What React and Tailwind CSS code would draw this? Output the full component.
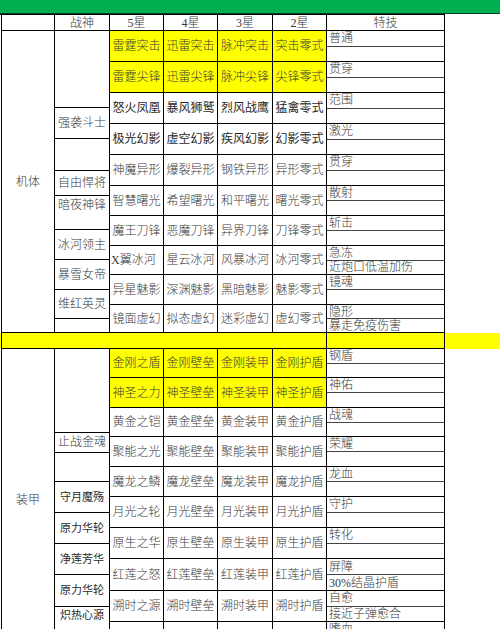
import React from "react";

const SERIF = "font-['Liberation_Serif','Noto_Sans_CJK_SC',serif] font-light text-[#3a3a3a]";
const SANS = "font-['Liberation_Sans','Noto_Sans_CJK_SC',sans-serif] font-normal text-[#2a2a2a]";

const STAR_W = ["w-[54px]", "w-[54px]", "w-[55px]", "w-[54px]"];

const sec1 = [
  { h: "h-[31px]", y: true, c: ["雷霆突击", "迅雷突击", "脉冲突击", "突击零式"], s: ["普通", ""] },
  { h: "h-[31px]", y: true, c: ["雷霆尖锋", "迅雷尖锋", "脉冲尖锋", "尖锋零式"], s: ["贯穿", ""] },
  { h: "h-[31px]", sans: true, c: ["怒火凤凰", "暴风狮鹫", "烈风战鹰", "猛禽零式"], s: ["范围", ""] },
  { h: "h-[31px]", sans: true, c: ["极光幻影", "虚空幻影", "疾风幻影", "幻影零式"], s: ["激光", ""] },
  { h: "h-[31px]", c: ["神魔异形", "爆裂异形", "钢铁异形", "异形零式"], s: ["贯穿", ""] },
  { h: "h-[30px]", c: ["智慧曙光", "希望曙光", "和平曙光", "曙光零式"], s: ["散射", ""] },
  { h: "h-[30px]", c: ["魔王刀锋", "恶魔刀锋", "异界刀锋", "刀锋零式"], s: ["斩击", ""] },
  { h: "h-[29px]", c: ["X翼冰河", "星云冰河", "风暴冰河", "冰河零式"], s: ["急冻", "近炮口低温加伤"], left0: true },
  { h: "h-[30px]", c: ["异星魅影", "深渊魅影", "黑暗魅影", "魅影零式"], s: ["镜魂", ""] },
  { h: "h-[28px]", c: ["镜面虚幻", "拟态虚幻", "迷彩虚幻", "虚幻零式"], s: ["隐形", "暴走免疫伤害"] },
];

const sec2 = [
  { h: "h-[29px]", y: true, c: ["金刚之盾", "金刚壁垒", "金刚装甲", "金刚护盾"], s: ["钢盾", ""] },
  { h: "h-[30px]", y: true, c: ["神圣之力", "神圣壁垒", "神圣装甲", "神圣护盾"], s: ["神佑", ""] },
  { h: "h-[29px]", c: ["黄金之铠", "黄金壁垒", "黄金装甲", "黄金护盾"], s: ["战魂", ""] },
  { h: "h-[30px]", c: ["聚能之光", "聚能壁垒", "聚能装甲", "聚能护盾"], s: ["荣耀", ""] },
  { h: "h-[30px]", c: ["魔龙之鳞", "魔龙壁垒", "魔龙装甲", "魔龙护盾"], s: ["龙血", ""] },
  { h: "h-[31px]", c: ["月光之轮", "月光壁垒", "月光装甲", "月光护盾"], s: ["守护", ""] },
  { h: "h-[31px]", c: ["原生之华", "原生壁垒", "原生装甲", "原生护盾"], s: ["转化", ""] },
  { h: "h-[32px]", c: ["红莲之怒", "红莲壁垒", "红莲装甲", "红莲护盾"], s: ["屏障", "30%结晶护盾"] },
  { h: "h-[31px]", c: ["溯时之源", "溯时壁垒", "溯时装甲", "溯时护盾"], s: ["自愈", "接近子弹愈合"] },
  { h: "h-[30px]", c: ["", "", "", ""], s: ["嗜血", ""] },
];

const names1 = [
  { h: "h-[77px]", t: "" },
  { h: "h-[31px]", t: "强袭斗士" },
  { h: "h-[32px]", t: "" },
  { h: "h-[25px]", t: "自由悍将" },
  { h: "h-[34px]", t: "暗夜神锋", top: true },
  { h: "h-[30px]", t: "冰河领主" },
  { h: "h-[30px]", t: "暴雪女帝" },
  { h: "h-[29px]", t: "维红英灵" },
  { h: "h-[14px]", t: "" },
];

const names2 = [
  { h: "h-[84px]", t: "" },
  { h: "h-[20px]", t: "止战金魂", top: true },
  { h: "h-[29px]", t: "" },
  { h: "h-[31px]", t: "守月魔殇", sans: true },
  { h: "h-[31px]", t: "原力华轮", sans: true },
  { h: "h-[31px]", t: "净莲芳华", sans: true },
  { h: "h-[32px]", t: "原力华轮", sans: true },
  { h: "h-[45px]", t: "炽热心源", sans: true, top: true },
];

function Row({ r }) {
  return (
    <div className={`flex ${r.h}`}>
      {r.c.map((t, i) => (
        <div
          key={i}
          className={`${STAR_W[i]} h-full flex items-center ${
            r.left0 && i === 0 ? "justify-start pl-[1px]" : "justify-center"
          } border-r border-b border-black text-[12px] leading-none whitespace-nowrap ${
            r.y ? "bg-[#ffff00]" : ""
          } ${r.sans ? SANS + " text-[12.5px]" : SERIF}`}
        >
          {t}
        </div>
      ))}
      <div className="w-[118px] h-full flex flex-col border-r border-b border-black">
        <div className={`flex-1 flex items-center pl-[2px] border-b border-[#444] text-[12px] leading-none whitespace-nowrap ${SERIF}`}>
          {r.s[0]}
        </div>
        <div className={`flex-1 flex items-center pl-[2px] text-[12px] leading-none whitespace-nowrap ${SERIF}`}>
          {r.s[1]}
        </div>
      </div>
    </div>
  );
}

function NameCol({ items }) {
  return (
    <div className="w-[55px] flex flex-col shrink-0">
      {items.map((n, i) => (
        <div
          key={i}
          className={`${n.h} shrink-0 flex ${n.top ? "items-start pt-[3px]" : "items-center"} justify-center border-r border-b border-black leading-none whitespace-nowrap ${
            n.sans ? SANS + " text-[11px]" : SERIF + " text-[12px]"
          }`}
        >
          {n.t}
        </div>
      ))}
    </div>
  );
}

export default function App() {
  return (
    <div className="w-[500px] h-[629px] overflow-hidden bg-white">
      <div className="h-[14px] bg-[#00b050] border-b border-[#0b3d1f]" />
      <div className="h-px bg-black w-[445px]" />
      {/* header */}
      <div className="flex h-[16px] pl-[1px]">
        <div className="w-[54px] border-l border-r border-b border-black" />
        {[
          ["w-[55px]", "战神"],
          ["w-[54px]", "5星"],
          ["w-[54px]", "4星"],
          ["w-[55px]", "3星"],
          ["w-[54px]", "2星"],
          ["w-[118px]", "特技"],
        ].map(([w, t]) => (
          <div key={t} className={`${w} flex items-center justify-center border-r border-b border-black text-[12px] leading-none ${SERIF}`}>
            {t}
          </div>
        ))}
      </div>
      {/* section 1 */}
      <div className="flex pl-[1px] h-[302px]">
        <div className={`w-[54px] shrink-0 flex items-center justify-center border-l border-r border-b border-black text-[12px] leading-none ${SERIF}`}>
          机体
        </div>
        <NameCol items={names1} />
        <div className="flex flex-col">
          {sec1.map((r, i) => (
            <Row key={i} r={r} />
          ))}
        </div>
      </div>
      {/* yellow band */}
      <div className="flex h-[16px] bg-[#ffff00] pl-[1px]">
        <div className="w-[326px] border-l border-r border-b border-black" />
        <div className="w-[118px] border-r border-b border-black" />
      </div>
      {/* section 2 */}
      <div className="flex pl-[1px] h-[303px]">
        <div className={`w-[54px] shrink-0 flex items-center justify-center border-l border-r border-b border-black text-[12px] leading-none ${SERIF}`}>
          装甲
        </div>
        <NameCol items={names2} />
        <div className="flex flex-col">
          {sec2.map((r, i) => (
            <Row key={i} r={r} />
          ))}
        </div>
      </div>
    </div>
  );
}
